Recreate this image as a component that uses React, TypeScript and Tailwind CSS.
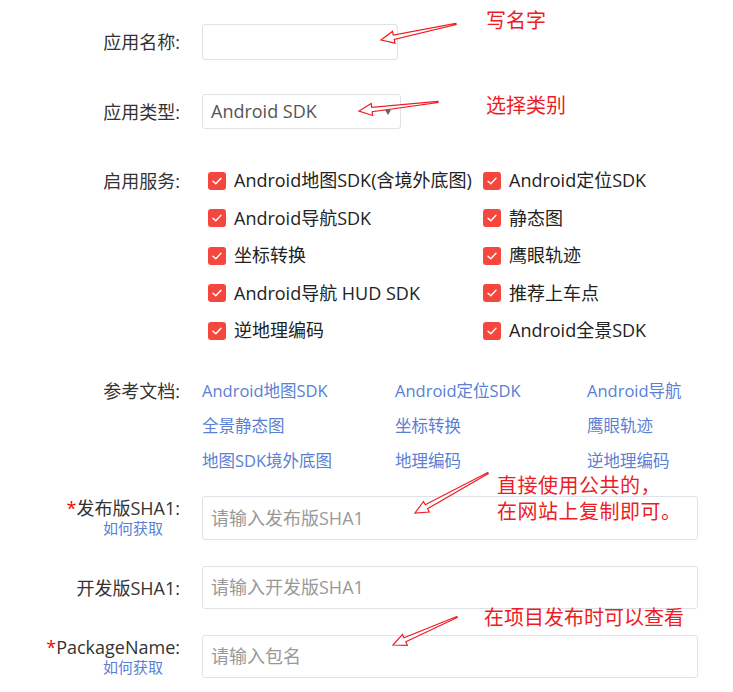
import React from "react";

const FONT = { fontFamily: '"Open Sans", "Noto Sans CJK SC", sans-serif' };

function arrowPoints(tx: number, ty: number, hx: number, hy: number) {
  const dx = hx - tx;
  const dy = hy - ty;
  const len = Math.sqrt(dx * dx + dy * dy);
  const ux = dx / len;
  const uy = dy / len;
  const px = -uy;
  const py = ux;
  const headLen = 13;
  const headW = 6;
  const shaftW = 2.2;
  const tailW = 0.6;
  const bx = hx - ux * headLen;
  const by = hy - uy * headLen;
  const pts = [
    [tx + px * tailW, ty + py * tailW],
    [bx + px * shaftW, by + py * shaftW],
    [bx + px * headW, by + py * headW],
    [hx, hy],
    [bx - px * headW, by - py * headW],
    [bx - px * shaftW, by - py * shaftW],
    [tx - px * tailW, ty - py * tailW],
  ];
  return pts.map((p) => p.map((v) => v.toFixed(1)).join(",")).join(" ");
}

function Check() {
  return (
    <span className="flex h-[18px] w-[18px] shrink-0 items-center justify-center rounded-[3px] bg-[#f5473e]">
      <svg width="10" height="8" viewBox="0 0 10 8" fill="none">
        <path d="M1 4.2 L3.8 6.8 L9 1.2" stroke="white" strokeWidth="1.4" strokeLinecap="round" strokeLinejoin="round" />
      </svg>
    </span>
  );
}

function CB({ label }: { label: string }) {
  return (
    <div className="flex h-[37.5px] items-center gap-[8px] whitespace-nowrap text-[18px] text-[#222]">
      <Check />
      <span>{label}</span>
    </div>
  );
}

function Label({ children, star }: { children: React.ReactNode; star?: boolean }) {
  return (
    <span className="whitespace-nowrap text-[18px] leading-[24px] text-[#333]">
      {star && <span className="text-[#ff0000]">*</span>}
      {children}
    </span>
  );
}

export default function App() {
  const services: [string, string][] = [
    ["Android地图SDK(含境外底图)", "Android定位SDK"],
    ["Android导航SDK", "静态图"],
    ["坐标转换", "鹰眼轨迹"],
    ["Android导航 HUD SDK", "推荐上车点"],
    ["逆地理编码", "Android全景SDK"],
  ];
  const docs = [
    ["Android地图SDK", "Android定位SDK", "Android导航"],
    ["全景静态图", "坐标转换", "鹰眼轨迹"],
    ["地图SDK境外底图", "地理编码", "逆地理编码"],
  ];
  const arrows: [number, number, number, number][] = [
    [456, 24, 381, 40],
    [438, 102, 359, 111],
    [488, 473, 415, 513],
    [457, 617, 393, 645],
  ];
  return (
    <div className="relative h-[692px] w-[733px] overflow-hidden bg-white" style={FONT}>
      <div className="flex flex-col">
        {/* 应用名称 */}
        <div className="mt-[24px] flex items-center">
          <div className="flex w-[180px] justify-end">
            <Label>应用名称:</Label>
          </div>
          <div className="ml-[22px] h-[36px] w-[196px] rounded-[3px] border border-[#dfe2e8]" />
        </div>
        {/* 应用类型 */}
        <div className="mt-[34px] flex items-center">
          <div className="flex w-[180px] justify-end">
            <Label>应用类型:</Label>
          </div>
          <div className="ml-[22px] flex h-[35px] w-[199px] items-center justify-between rounded-[3px] border border-[#dfe2e8] pl-[8px] pr-[9px]">
            <span className="text-[18px] text-[#555]">Android SDK</span>
            <span className="mt-[2px] h-0 w-0 border-x-[3px] border-t-[5px] border-x-transparent border-t-[#666]" />
          </div>
        </div>
        {/* 启用服务 */}
        <div className="mt-[33px] flex items-start">
          <div className="flex h-[37.5px] w-[180px] items-center justify-end">
            <Label>启用服务:</Label>
          </div>
          <div className="ml-[28px] grid grid-cols-[275px_auto]">
            {services.map(([a, b]) => (
              <React.Fragment key={a}>
                <CB label={a} />
                <CB label={b} />
              </React.Fragment>
            ))}
          </div>
        </div>
        {/* 参考文档 */}
        <div className="mt-[24px] flex items-start">
          <div className="flex h-[35px] w-[180px] items-center justify-end">
            <Label>参考文档:</Label>
          </div>
          <div className="ml-[22px] grid grid-cols-[193px_192px_auto]">
            {docs.flat().map((d) => (
              <div key={d} className="flex h-[35px] items-center whitespace-nowrap text-[16.5px] text-[#5a7fd4]">
                {d}
              </div>
            ))}
          </div>
        </div>
        {/* 发布版SHA1 */}
        <div className="mt-[17.5px] flex items-start">
          <div className="flex w-[180px] flex-col items-end">
            <Label star>发布版SHA1:</Label>
            <span className="mr-[17px] text-[15px] leading-[16px] text-[#5a7fd4]">如何获取</span>
          </div>
          <div className="ml-[22px] flex h-[44px] w-[496px] items-center rounded-[3px] border border-[#dfe2e8] pl-[8px] text-[18px] text-[#999]">
            请输入发布版SHA1
          </div>
        </div>
        {/* 开发版SHA1 */}
        <div className="mt-[26px] flex items-center">
          <div className="flex w-[180px] justify-end">
            <Label>开发版SHA1:</Label>
          </div>
          <div className="ml-[22px] flex h-[43px] w-[496px] items-center rounded-[3px] border border-[#dfe2e8] pl-[8px] text-[18px] text-[#999]">
            请输入开发版SHA1
          </div>
        </div>
        {/* PackageName */}
        <div className="mt-[26px] flex items-start">
          <div className="flex w-[180px] flex-col items-end">
            <Label star>PackageName:</Label>
            <span className="mr-[17px] text-[15px] leading-[16px] text-[#5a7fd4]">如何获取</span>
          </div>
          <div className="ml-[22px] flex h-[43px] w-[496px] items-center rounded-[3px] border border-[#dfe2e8] pl-[8px] text-[18px] text-[#999]">
            请输入包名
          </div>
        </div>
      </div>

      {/* annotations */}
      <svg className="pointer-events-none absolute left-0 top-0" width="733" height="692">
        {arrows.map((a, i) => (
          <polygon key={i} points={arrowPoints(a[0], a[1], a[2], a[3])} fill="white" stroke="#ee1c25" strokeWidth="1.2" strokeLinejoin="miter" />
        ))}
      </svg>
      <div className="absolute left-[486px] top-[8px] text-[20px] leading-[26px] text-[#ee1c25]">写名字</div>
      <div className="absolute left-[486px] top-[93px] text-[20px] leading-[26px] text-[#ee1c25]">选择类别</div>
      <div className="absolute left-[497px] top-[473px] text-[20px] leading-[26px] tracking-[0.5px] text-[#ee1c25]">
        <div>直接使用公共的，</div>
        <div>在网站上复制即可。</div>
      </div>
      <div className="absolute left-[484px] top-[605px] text-[20px] leading-[26px] text-[#ee1c25]">在项目发布时可以查看</div>
    </div>
  );
}
